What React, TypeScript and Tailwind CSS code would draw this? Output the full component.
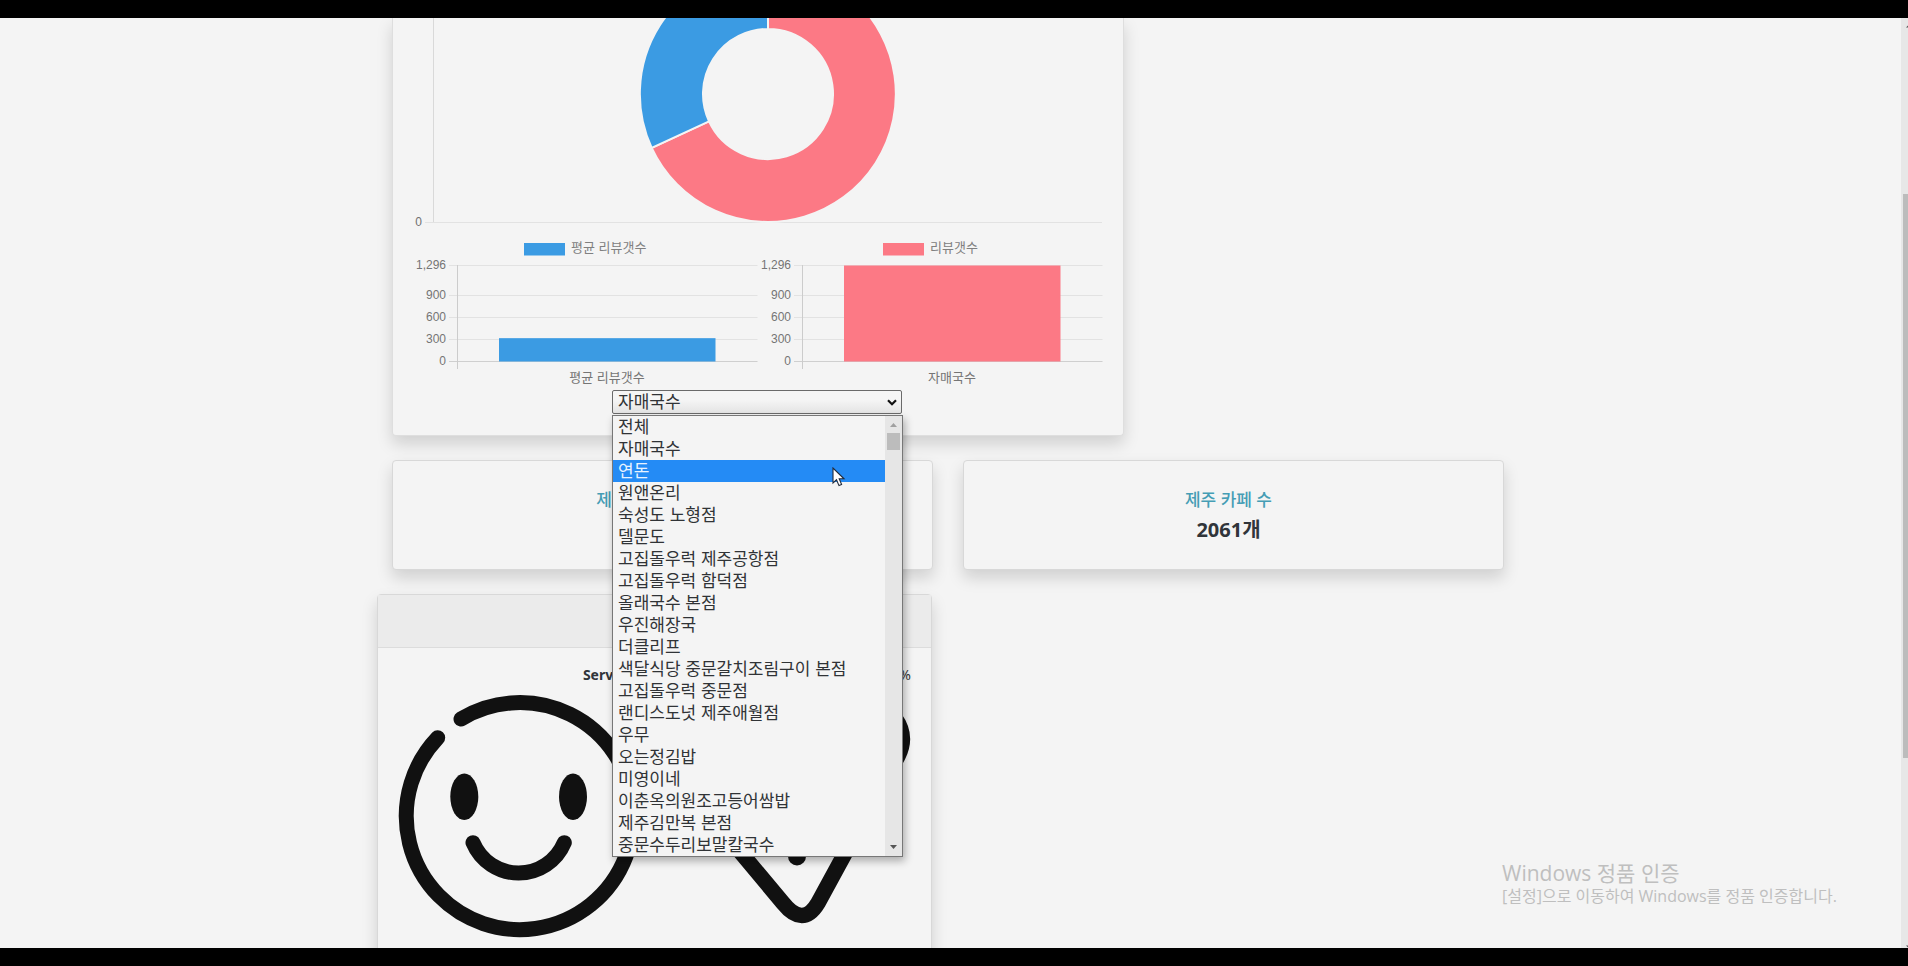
import React, { useState } from "react";

const STORES = [
  "전체",
  "자매국수",
  "연돈",
  "원앤온리",
  "숙성도 노형점",
  "델문도",
  "고집돌우럭 제주공항점",
  "고집돌우럭 함덕점",
  "올래국수 본점",
  "우진해장국",
  "더클리프",
  "색달식당 중문갈치조림구이 본점",
  "고집돌우럭 중문점",
  "랜디스도넛 제주애월점",
  "우무",
  "오는정김밥",
  "미영이네",
  "이춘옥의원조고등어쌈밥",
  "제주김만복 본점",
  "중문수두리보말칼국수",
];

const BLUE = "#3b9be3";
const PINK = "#fc7985";

const SHADOW = "shadow-[0_8px_16px_rgba(0,0,0,0.15)]";

function DonutChart() {
  return (
    <svg viewBox="393 18 730 209" className="block w-full" role="img" aria-label="리뷰갯수 비율">
      <path d="M433.5 18V222" stroke="#d9d9d9" />
      <path d="M425 222.5H1102" stroke="#e2e2e2" />
      <text x="422" y="226" textAnchor="end" className="fill-[#707070] text-[12px]">0</text>
      <g stroke="#f4f4f4" strokeWidth="2">
        <path d="M768 -34A128 128 0 1 1 651.700 147.800L709 121.300A65 65 0 1 0 768 29Z" fill={PINK} />
        <path d="M768 -34A128 128 0 0 0 651.700 147.800L709 121.300A65 65 0 0 1 768 29Z" fill={BLUE} />
      </g>
    </svg>
  );
}

type BarProps = {
  legend: string;
  label: string;
  value: number;
  color: string;
  legendX: number;
};

function BarChart({ legend, label, value, color, legendX }: BarProps) {
  const base = 134.5;
  const height = (value / 1296) * 96;
  const ticks: [string, number][] = [
    ["1,296", 38.5],
    ["900", 68.5],
    ["600", 90.5],
    ["300", 112.5],
    ["0", 134.5],
  ];
  return (
    <svg viewBox="0 0 345 163" className="block w-1/2" role="img" aria-label={legend}>
      <rect x={legendX} y="16" width="41" height="12.500" fill={color} />
      <text x={legendX + 47} y="25" className="fill-[#808080] text-[13px]">{legend}</text>
      {ticks.map(([text, y]) => (
        <g key={text}>
          <path d={`M36 ${y}H344.500`} stroke={text === "0" ? "#cfcfcf" : "#e2e2e2"} />
          <text x="33" y={y + 3} textAnchor="end" className="fill-[#757575] text-[12px]">{text}</text>
        </g>
      ))}
      <path d="M44.500 38V142" stroke="#cccccc" />
      <rect x="86" y={base - height} width="216.500" height={height} fill={color} />
      <text x="194" y="155" textAnchor="middle" className="fill-[#757575] text-[13px]">{label}</text>
    </svg>
  );
}

function Cursor() {
  return (
    <svg viewBox="0 0 14 20" className="pointer-events-none absolute left-[219px] top-[51px] h-5 w-3.5" aria-hidden="true">
      <path d="M1 1V16L4.500 12.800L7 18.600L9.600 17.500L7.200 11.800H12Z" fill="#fff" stroke="#222b3a" strokeWidth="1.100" />
    </svg>
  );
}

function StorePicker() {
  const [store, setStore] = useState("자매국수");
  return (
    <div className="relative z-10 ml-[219px] w-[290px] text-[17px] text-[#303336]">
      <select
        id="store"
        aria-label="매장 선택"
        value={store}
        onChange={(e) => setStore(e.target.value)}
        className="block h-6 w-full appearance-none rounded-[2px] border border-[#6a6a6a] bg-gradient-to-b from-[#f5f5f5] from-40% to-[#e4e4e4] pl-[5px] pt-0.5 leading-5 outline-none"
      >
        {STORES.map((name) => (
          <option key={name}>{name}</option>
        ))}
      </select>
      <svg viewBox="0 0 10 7" className="pointer-events-none absolute right-[5px] top-[9px] h-[7px] w-2.5" aria-hidden="true">
        <path d="M1 1.200L5 5.200L9 1.200" fill="none" stroke="#111" strokeWidth="2.200" />
      </svg>
      <div className="absolute left-0 top-[25px] flex w-[291px] border border-[#777] bg-[#f4f4f4] shadow-[2px_4px_8px_rgba(0,0,0,0.3)]">
        <ul role="listbox" aria-label="매장 목록" className="min-w-0 flex-1">
          {STORES.map((name) => (
            <li
              key={name}
              role="option"
              aria-selected={name === "연돈"}
              className="h-[22px] whitespace-nowrap pl-[5px] leading-6 aria-selected:bg-[#248bf5] aria-selected:text-[#e8f3ff]"
            >
              {name}
            </li>
          ))}
        </ul>
        <div className="flex w-[17px] flex-col items-center bg-[#e6e6e6]" aria-hidden="true">
          <svg viewBox="0 0 17 17" className="h-[17px] w-[17px]">
            <path d="M5 11L8.500 7L12 11Z" fill="#a0a0a0" />
          </svg>
          <div className="h-[17px] w-[13px] bg-[#bcbcbc]" />
          <svg viewBox="0 0 17 17" className="mt-auto h-[17px] w-[17px]">
            <path d="M5 6L8.500 10L12 6Z" fill="#555" />
          </svg>
        </div>
        <Cursor />
      </div>
    </div>
  );
}

function StatCard({ title, value }: { title: string; value?: string }) {
  return (
    <section className={`flex h-[110px] flex-col items-center justify-center gap-0.5 rounded border border-[#d8d8d8] bg-[#f4f4f4] pr-2.5 ${SHADOW}`}>
      <h2 className="text-[17px] font-medium leading-7 text-[#459db5]">{title}</h2>
      <p className="h-7 text-[20px] font-bold leading-7 text-[#30353a]">{value}</p>
    </section>
  );
}

function SmileIcon() {
  return (
    <svg viewBox="395 692 246 250" className="block h-[250px] w-[246px]" fill="none" stroke="#111" strokeWidth="15" strokeLinecap="round" aria-hidden="true">
      <path d="M461 719A113.500 113.500 0 1 1 437.700 737.700" />
      <path d="M473 842.700A49.500 49.500 0 0 0 564.300 842.700" />
      <ellipse cx="464.300" cy="796.700" rx="14" ry="23.300" fill="#111" stroke="none" />
      <ellipse cx="573" cy="796.700" rx="14" ry="23.300" fill="#111" stroke="none" />
    </svg>
  );
}

function PizzaIcon() {
  return (
    <svg viewBox="665 692 246 250" className="block h-[250px] w-[246px]" fill="none" stroke="#111" strokeWidth="15.500" strokeLinecap="round" strokeLinejoin="round" aria-hidden="true">
      <path d="M682 782L783 903Q803 928 818 903L898 756Q908 736 895 718Q850 700 790 704Q720 708 682 735Q666 755 682 782" />
      <path d="M797 820V856.500" strokeWidth="18" />
    </svg>
  );
}

function ScoreCard() {
  return (
    <section className={`w-[555px] rounded border border-[#d8d8d8] bg-[#f4f4f4] ${SHADOW}`}>
      <header className="h-[53px] border-b border-[#dcdcdc] bg-[#ebebeb]" />
      <div className="flex gap-6 pb-12 pl-[17px] pt-4 font-['Noto_Sans','Noto_Sans_CJK_KR',sans-serif] text-[14px] leading-[22px] text-[#30353a]">
        <div className="flex flex-col gap-1.5">
          <p className="pr-2 text-right font-bold">Service</p>
          <SmileIcon />
        </div>
        <div className="flex flex-col gap-1.5">
          <p className="text-right">%</p>
          <PizzaIcon />
        </div>
      </div>
    </section>
  );
}

export default function App() {
  return (
    <div className="flex h-screen flex-col overflow-hidden bg-black font-['Liberation_Sans','Noto_Sans_CJK_KR',sans-serif]">
      <div className="relative my-[18px] flex min-h-0 flex-1 overflow-hidden bg-[#f4f4f4]">
        <main className="min-w-0 flex-1 pr-[5px]">
          <div className="mx-auto flex w-full max-w-[1142px] flex-col gap-6">
            <div className="px-[15px]">
              <section className={`max-w-[732px] rounded-b border border-t-0 border-[#dedede] bg-[#f4f4f4] pb-[21px] ${SHADOW}`}>
                <DonutChart />
                <div className="flex px-5">
                  <BarChart legend="평균 리뷰갯수" label="평균 리뷰갯수" value={315} color={BLUE} legendX={111} />
                  <BarChart legend="리뷰갯수" label="자매국수" value={1296} color={PINK} legendX={125} />
                </div>
                <StorePicker />
              </section>
            </div>
            <div className="grid grid-cols-2 gap-[30px] px-[15px] font-['Noto_Sans','Noto_Sans_CJK_KR',sans-serif]">
              <StatCard title="제주 음식점 총 수" />
              <StatCard title="제주 카페 수" value="2061개" />
            </div>
            <ScoreCard />
          </div>
        </main>

        <div className="flex w-[7px] flex-col overflow-hidden bg-[#e7e7e7] pl-0.5" aria-hidden="true">
          <svg viewBox="0 0 5 176" className="h-[176px] w-[5px] shrink-0">
            <path d="M3 9.500L6 6.500V9.500Z" fill="#505050" />
          </svg>
          <div className="h-[564px] shrink-0 bg-[#bcbcbc]" />
          <svg viewBox="0 0 5 10" className="mt-auto h-2.5 w-[5px] shrink-0">
            <path d="M3 7.500L6 10.500V7.500Z" fill="#505050" />
          </svg>
        </div>

        <aside className="pointer-events-none absolute bottom-[41px] right-[70px] w-[336px] whitespace-nowrap font-['Open_Sans','Noto_Sans_CJK_KR',sans-serif] text-[#bfbfbf]">
          <p className="text-[21px] leading-6">Windows 정품 인증</p>
          <p className="text-[16px] leading-[22px]">[설정]으로 이동하여 Windows를 정품 인증합니다.</p>
        </aside>
      </div>
    </div>
  );
}
